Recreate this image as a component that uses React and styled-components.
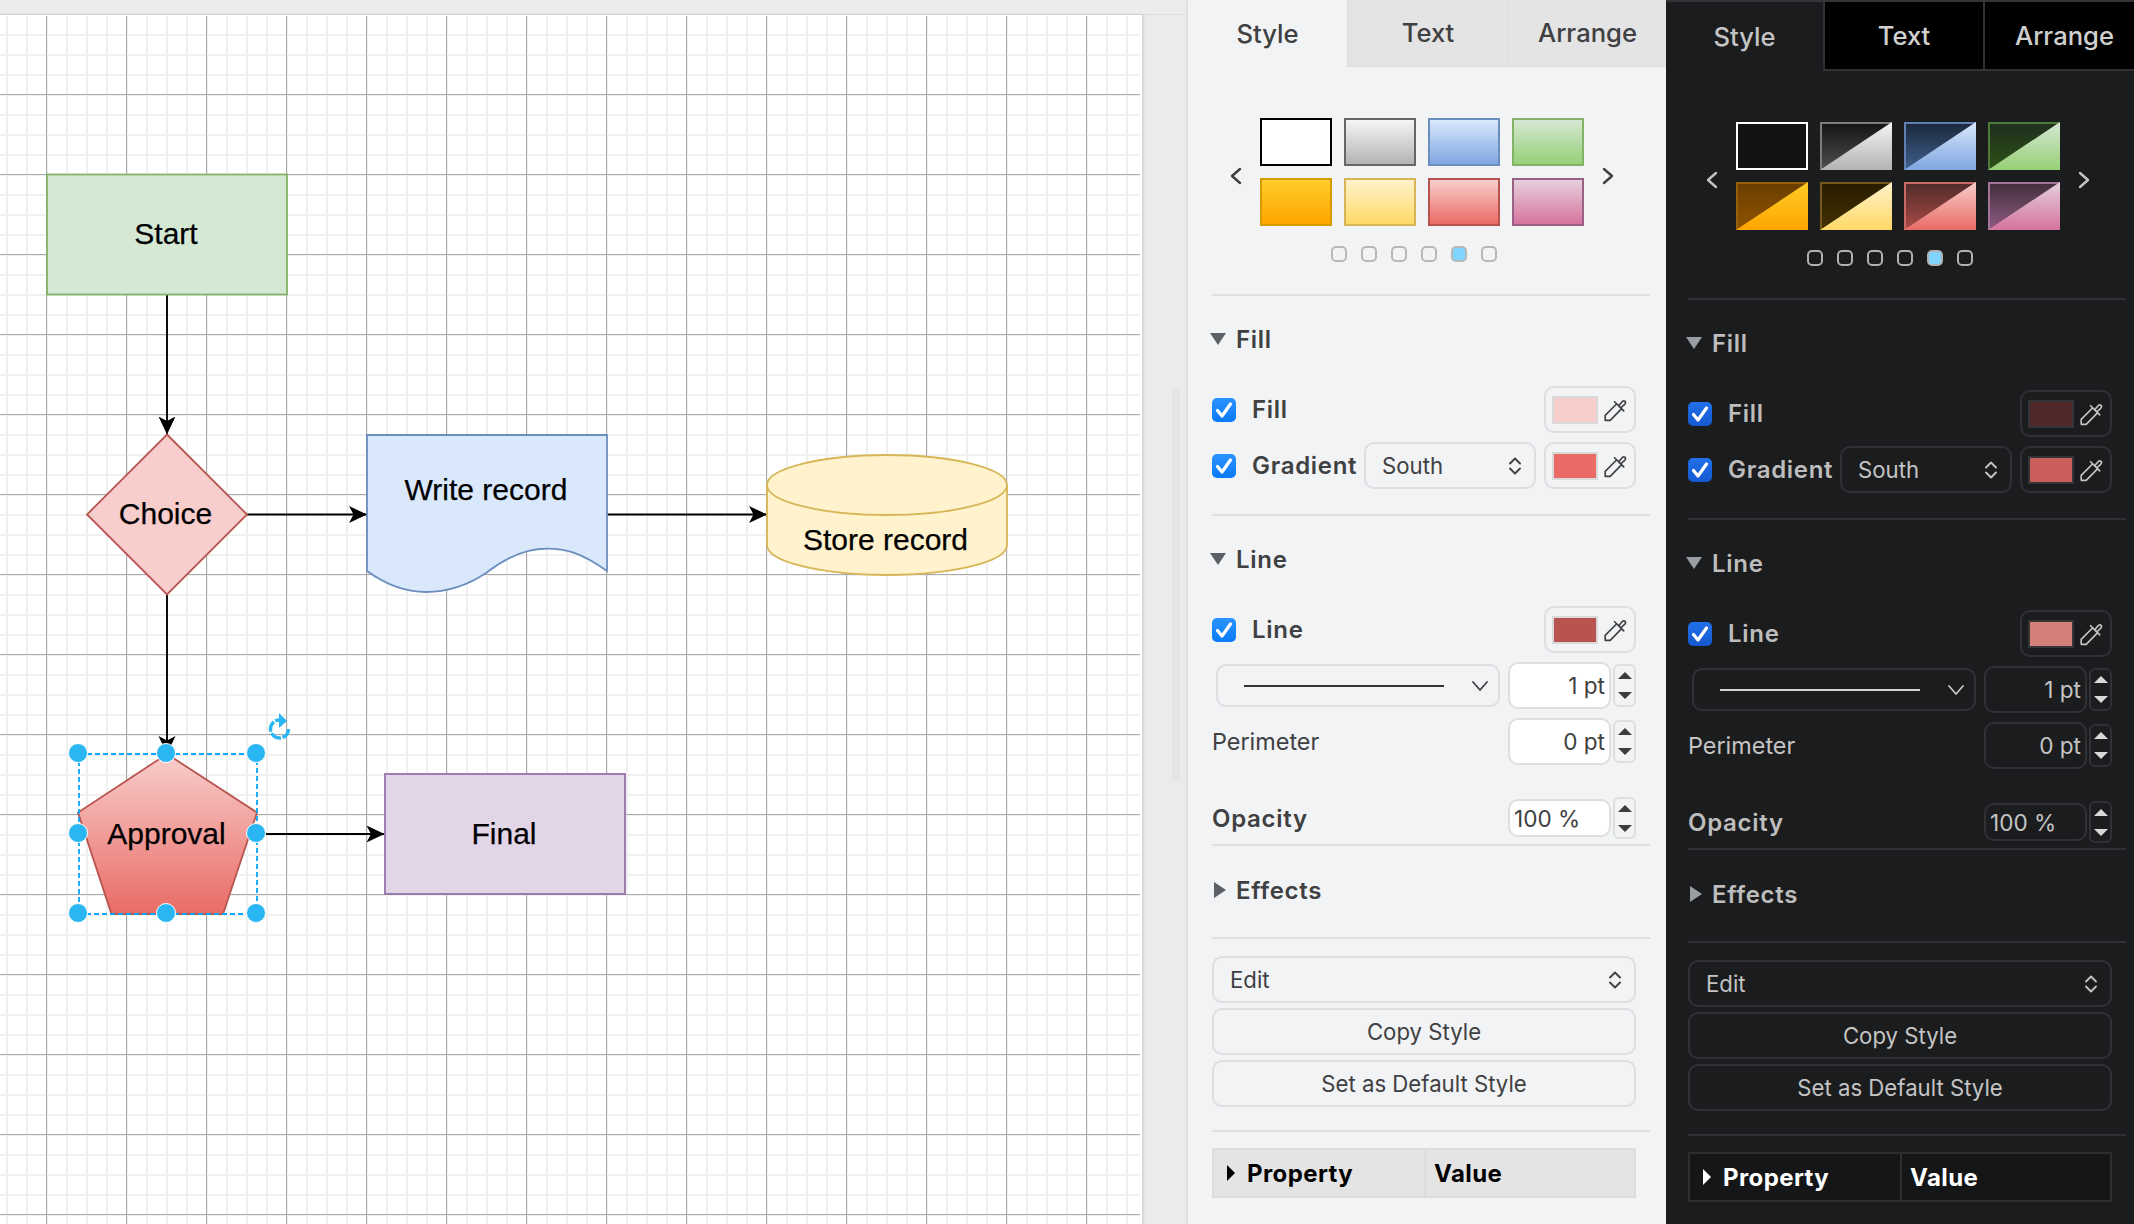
import styled, { ThemeProvider, createGlobalStyle } from "styled-components";

const lightTheme = {
  bg: "#f1f3f5",
  text: "#3f4042",
  strong: "#3f4042",
  tabBg: "#e4e4e4",
  tabText: "#3f4042",
  line: "#dfe0e2",
  field: "#dcdee0",
  inputBg: "#ffffff",
  tri: "#5c5f66",
  step: "#3c3c3c",
  dash: "#333333",
  check: "linear-gradient(#2b93ff, #0a7bf7)",
  dot: "#b8b8b8",
  chip: "#d9d9d9",
  tableBg: "#e4e4e4",
  tableLine: "#dcdcdc",
  tableText: "#000000",
  topStrip: "0",
  tabHeight: "67px",
  tabColumns: "159px 160px 159px",
  inset: "24px",
  width: "478px",
};

const darkTheme = {
  bg: "#1b1c1e",
  text: "#c4c4c4",
  strong: "#bdbdbd",
  tabBg: "#000000",
  tabText: "#d0d0d0",
  line: "#2f3134",
  field: "#2f3134",
  inputBg: "#1b1c1e",
  tri: "#9a9da3",
  step: "#d8d8d8",
  dash: "#d4d4d4",
  check: "linear-gradient(#2270ea, #1458cf)",
  dot: "#b0b0b0",
  chip: "#333538",
  tableBg: "#151618",
  tableLine: "#2e2f31",
  tableText: "#ffffff",
  topStrip: "2px",
  tabHeight: "69px",
  tabColumns: "157px 160px 161px",
  inset: "22px",
  width: "468px",
};

const GlobalStyle = createGlobalStyle`
  html, body {
    margin: 0;
    padding: 0;
    background: #ececec;
  }
  body {
    font-family: Inter, "Liberation Sans", sans-serif;
  }
`;

const Screen = styled.div`
  display: flex;
  width: 2134px;
  height: 1224px;
  overflow: hidden;
`;

const Stage = styled.div`
  width: 1186px;
  flex: none;
  display: flex;
  flex-direction: column;
  background: #ebebeb;
  border-right: 2px solid #e0e0e0;
`;

const TopBar = styled.div`
  height: 14px;
  flex: none;
  background: #ececec;
  border-bottom: 1px solid #dedede;
`;

const Workarea = styled.div`
  flex: 1;
  display: flex;
  min-height: 0;
`;

const Page = styled.div`
  position: relative;
  width: 1140px;
  flex: none;
  overflow: hidden;
  border-top: 1px solid #ffffff;
  border-right: 2px solid #ffffff;
  box-shadow: 1px 0 3px rgba(0, 0, 0, 0.16);
  background-color: #ffffff;
  background-clip: padding-box;
  background-image:
    linear-gradient(to right, #a9a9a9 1px, transparent 1px),
    linear-gradient(to bottom, #a9a9a9 1px, transparent 1px),
    linear-gradient(to right, #f0f0f0 2px, transparent 2px),
    linear-gradient(to bottom, #f0f0f0 2px, transparent 2px);
  background-size: 80px 80px, 80px 80px, 20px 20px, 20px 20px;
  background-position: 46px 0, 0 78px, 6px 0, 0 18px;
`;

const Drawing = styled.svg`
  position: absolute;
  left: 0;
  top: 0;
`;

const Label = styled.text`
  font-family: "Liberation Sans", Arial, sans-serif;
  font-size: 30px;
  fill: #000000;
  stroke: #000000;
  stroke-width: 0.25px;
  text-anchor: middle;
  dominant-baseline: central;
`;

const Gutter = styled.div`
  flex: 1;
  padding: 375px 6px 0 30px;
`;

const ScrollThumb = styled.div`
  width: 8px;
  height: 391px;
  background: #e4e4e4;
`;

const Panel = styled.div`
  width: ${(props) => props.theme.width};
  flex: none;
  box-sizing: border-box;
  height: 1224px;
  overflow: hidden;
  padding-top: ${(props) => props.theme.topStrip};
  background: ${(props) => props.theme.bg};
  color: ${(props) => props.theme.text};
  box-shadow: inset 0 ${(props) => props.theme.topStrip} 0 #333538;
`;

const Tabs = styled.div`
  display: grid;
  grid-template-columns: ${(props) => props.theme.tabColumns};
  height: ${(props) => props.theme.tabHeight};
  width: 478px;
`;

const Tab = styled.div`
  box-sizing: border-box;
  display: flex;
  align-items: center;
  justify-content: center;
  padding-bottom: 1px;
  font-size: 25.6px;
  font-weight: 500;
  color: ${(props) => (props.$active ? props.theme.text : props.theme.tabText)};
  background: ${(props) => (props.$active ? "transparent" : props.theme.tabBg)};
  border-left: ${(props) => (props.$active ? "0" : `2px solid ${props.theme.line}`)};
  border-bottom: ${(props) => (props.$active ? "0" : `2px solid ${props.theme.line}`)};
`;

const Body = styled.div`
  padding-left: ${(props) => props.theme.inset};
`;

const Section = styled.div`
  box-sizing: content-box;
  width: 438px;
  padding-top: ${(props) => props.$top}px;
  padding-bottom: ${(props) => props.$bottom}px;
  border-bottom: ${(props) => (props.$last ? "0" : `2px solid ${props.theme.line}`)};
`;

const Content = styled.div`
  width: 424px;
  display: flex;
  flex-direction: column;
  gap: ${(props) => props.$gap || 9}px;
  margin-top: ${(props) => props.$top || 0}px;
`;

const Picker = styled.div`
  display: flex;
  align-items: center;
  justify-content: space-between;
  box-sizing: border-box;
  padding-left: 17px;
  width: 403px;
`;

const Swatches = styled.div`
  display: grid;
  grid-template-columns: repeat(4, 72px);
  grid-auto-rows: 48px;
  gap: 12px;
`;

const Swatch = styled.div`
  position: relative;
  box-sizing: border-box;
  border: 2px solid ${(props) => props.$border};
  background: ${(props) => props.$fill};
  &::after {
    content: "";
    display: ${(props) => (props.$over ? "block" : "none")};
    position: absolute;
    inset: -2px;
    background: ${(props) => props.$over};
    clip-path: polygon(100% 0, 100% 100%, 0 100%);
  }
`;

const NavHolder = styled.span`
  display: flex;
  margin-top: 7px;
`;

const Dots = styled.div`
  display: flex;
  justify-content: center;
  gap: 14px;
  margin-top: 20px;
  width: 404px;
`;

const Dot = styled.span`
  box-sizing: border-box;
  width: 16px;
  height: 16px;
  border: 2px solid ${(props) => props.theme.dot};
  border-radius: 5px;
  background: ${(props) => (props.$on ? "#80d4ff" : "transparent")};
`;

const Header = styled.div`
  display: flex;
  align-items: center;
  height: 28px;
  font-size: 24px;
  font-weight: 600;
  letter-spacing: 0.7px;
  color: ${(props) => props.theme.strong};
`;

const Caret = styled.svg`
  width: 16px;
  height: 16px;
  margin-left: ${(props) => (props.$open ? "-2px" : "0")};
  margin-right: ${(props) => (props.$open ? "10px" : "8px")};
  fill: ${(props) => props.theme.tri};
`;

const Row = styled.div`
  display: flex;
  align-items: center;
  height: 47px;
`;

const OpacityRow = styled(Row)`
  height: 42px;
`;

const Box = styled.div`
  width: 24px;
  height: 24px;
  flex: none;
  display: flex;
  align-items: center;
  justify-content: center;
  border-radius: 5px;
  background: ${(props) => props.theme.check};
  margin-right: 16px;
`;

const RowLabel = styled.span`
  font-size: 24px;
  font-weight: 600;
  letter-spacing: 0.7px;
  color: ${(props) => props.theme.strong};
`;

const PlainLabel = styled.span`
  font-size: 23.4px;
  color: ${(props) => props.theme.text};
`;

const ColorButton = styled.div`
  box-sizing: border-box;
  margin-left: ${(props) => (props.$push ? "auto" : "8px")};
  width: 92px;
  height: 47px;
  flex: none;
  display: flex;
  align-items: center;
  padding-left: 6px;
  border: 2px solid ${(props) => props.theme.field};
  border-radius: 10px;
`;

const Chip = styled.span`
  box-sizing: border-box;
  width: 46px;
  height: 28px;
  border: 2px solid ${(props) => props.theme.chip};
  background: ${(props) => props.$color};
  margin-right: 5px;
`;

const Select = styled.div`
  box-sizing: border-box;
  display: flex;
  align-items: center;
  justify-content: space-between;
  margin-left: ${(props) => (props.$push ? "auto" : "0")};
  width: ${(props) => props.$width || "424px"};
  height: 47px;
  flex: none;
  padding: 0 12px 0 16px;
  border: 2px solid ${(props) => props.theme.field};
  border-radius: 10px;
  font-size: 22.2px;
  color: ${(props) => props.theme.text};
`;

const LineSelect = styled(Select)`
  width: 284px;
  height: 43px;
  margin-left: 4px;
  padding: 0 9px 0 26px;
`;

const Stroke = styled.span`
  width: 200px;
  height: 2px;
  background: ${(props) => props.theme.dash};
`;

const Spin = styled.div`
  box-sizing: border-box;
  width: 103px;
  height: ${(props) => (props.$short ? "38px" : "47px")};
  margin-left: auto;
  flex: none;
  display: flex;
  align-items: center;
  justify-content: ${(props) => (props.$short ? "flex-start" : "flex-end")};
  padding: 0 4px;
  background: ${(props) => props.theme.inputBg};
  border: 2px solid ${(props) => props.theme.field};
  border-radius: 10px;
  font-size: 22.6px;
  color: ${(props) => props.theme.text};
`;

const Stepper = styled.div`
  box-sizing: border-box;
  width: 23px;
  height: ${(props) => (props.$tall ? "42px" : "43px")};
  margin-left: 2px;
  flex: none;
  display: flex;
  flex-direction: column;
  align-items: center;
  justify-content: center;
  gap: 13px;
  border: 2px solid ${(props) => props.theme.field};
  border-radius: 6px;
`;

const Arrow = styled.span`
  width: 0;
  height: 0;
  border-left: 7px solid transparent;
  border-right: 7px solid transparent;
  border-bottom: ${(props) => (props.$down ? "0" : `7px solid ${props.theme.step}`)};
  border-top: ${(props) => (props.$down ? `7px solid ${props.theme.step}` : "0")};
`;

const Button = styled.div`
  box-sizing: border-box;
  width: 424px;
  height: 47px;
  display: flex;
  align-items: center;
  justify-content: center;
  border: 2px solid ${(props) => props.theme.field};
  border-radius: 10px;
  font-size: 22.2px;
  color: ${(props) => props.theme.text};
`;

const Table = styled.div`
  box-sizing: border-box;
  display: grid;
  grid-template-columns: 210px 1fr;
  width: 424px;
  height: 50px;
  margin-top: 16px;
  background: ${(props) => props.theme.tableBg};
  border: 2px solid ${(props) => props.theme.tableLine};
  color: ${(props) => props.theme.tableText};
  font-size: 24px;
  font-weight: 700;
  letter-spacing: 0.4px;
`;

const Cell = styled.div`
  display: flex;
  align-items: center;
  padding-left: ${(props) => props.$pad}px;
  border-left: ${(props) => (props.$split ? `2px solid ${props.theme.tableLine}` : "0")};
`;

const Wedge = styled.span`
  width: 0;
  height: 0;
  margin-right: 12px;
  border-top: 8px solid transparent;
  border-bottom: 8px solid transparent;
  border-left: 8px solid ${(props) => props.theme.tableText};
`;

const Glyph = styled.svg`
  flex: none;
  fill: none;
  stroke: ${(props) => props.theme.text};
  stroke-linecap: round;
  stroke-linejoin: round;
`;

const Nav = ({ flip }) => (
  <NavHolder>
    <Glyph width="14" height="18" viewBox="0 0 14 18" strokeWidth="2.4">
      <path d={flip ? "M3 2l8 7-8 7" : "M11 2L3 9l8 7"} />
    </Glyph>
  </NavHolder>
);

const UpDown = () => (
  <Glyph width="14" height="18" viewBox="0 0 14 18" strokeWidth="1.9">
    <path d="M2 6.5 7 1.5l5 5M2 11.5l5 5 5-5" />
  </Glyph>
);

const Down = () => (
  <Glyph width="18" height="12" viewBox="0 0 18 12" strokeWidth="1.8">
    <path d="M2 2l7 8 7-8" />
  </Glyph>
);

const Dropper = () => (
  <Glyph width="24" height="24" viewBox="0 0 22 22" strokeWidth="1.5">
    <path d="M2 20.5v-4.6L12.6 5.3l4.5 4.5L6.6 20.5zM10.6 3.4l8.4 8.4" />
    <path d="M14.6 6.8l3.1-3.6c1.8-1.6 3.9.6 2.3 2.4l-3.3 3.1" />
  </Glyph>
);

const Tick = () => (
  <svg width="24" height="24" viewBox="0 0 24 24" fill="none" stroke="#ffffff" strokeWidth="3.2" strokeLinecap="round" strokeLinejoin="round">
    <path d="M5.5 12.5l4.5 5.5 8.5-12" />
  </svg>
);

const Disclosure = ({ title, open }) => (
  <Header>
    <Caret $open={open} viewBox="0 0 16 16">
      <path d={open ? "M0 2h16L8 14z" : "M2 0l12 8-12 8z"} />
    </Caret>
    {title}
  </Header>
);

const StepperControl = ({ tall }) => (
  <Stepper $tall={tall}>
    <Arrow />
    <Arrow $down />
  </Stepper>
);

const ColorControl = ({ color, push }) => (
  <ColorButton $push={push}>
    <Chip $color={color} />
    <Dropper />
  </ColorButton>
);

const lightSwatches = [
  { fill: "#ffffff", border: "#000000" },
  { fill: "linear-gradient(#f5f5f5, #b3b3b3)", border: "#666666" },
  { fill: "linear-gradient(#dae8fc, #7ea6e0)", border: "#6c8ebf" },
  { fill: "linear-gradient(#d5e8d4, #97d077)", border: "#82b366" },
  { fill: "linear-gradient(#ffcd28, #ffa500)", border: "#d79b00" },
  { fill: "linear-gradient(#fff2cc, #ffd966)", border: "#d6b656" },
  { fill: "linear-gradient(#f8cecc, #ea6b66)", border: "#b85450" },
  { fill: "linear-gradient(#e6d0de, #d5739d)", border: "#996185" },
];

const darkSwatches = [
  { fill: "#121212", border: "#ffffff" },
  { fill: "linear-gradient(#161616, #4c4c4c)", over: "linear-gradient(#f5f5f5, #b3b3b3)", border: "#7d7d7d" },
  { fill: "linear-gradient(#1c293c, #3f5f8c)", over: "linear-gradient(#dae8fc, #7ea6e0)", border: "#5f80b0" },
  { fill: "linear-gradient(#1f2f1e, #2d5016)", over: "linear-gradient(#d5e8d4, #97d077)", border: "#4f7a38" },
  { fill: "linear-gradient(#6b3f00, #8f5200)", over: "linear-gradient(#ffcd28, #ffa500)", border: "#97600a" },
  { fill: "linear-gradient(#291d00, #423000)", over: "linear-gradient(#fff2cc, #ffd966)", border: "#75581a" },
  { fill: "linear-gradient(#522c2a, #a84a47)", over: "linear-gradient(#f8cecc, #ea6b66)", border: "#c96a66" },
  { fill: "linear-gradient(#432f3f, #8e5a80)", over: "linear-gradient(#e6d0de, #d5739d)", border: "#a4739a" },
];

const FormatPanel = ({ theme, swatches, colors }) => (
  <ThemeProvider theme={theme}>
    <Panel>
      <Tabs>
        <Tab $active>Style</Tab>
        <Tab>Text</Tab>
        <Tab>Arrange</Tab>
      </Tabs>
      <Body>
        <Section $top={51} $bottom={32}>
          <Picker>
            <Nav />
            <Swatches>
              {swatches.map((s) => (
                <Swatch key={s.fill} $fill={s.fill} $over={s.over} $border={s.border} />
              ))}
            </Swatches>
            <Nav flip />
          </Picker>
          <Dots>
            {[0, 1, 2, 3, 4, 5].map((i) => (
              <Dot key={i} $on={i === 4} />
            ))}
          </Dots>
        </Section>

        <Section $top={29} $bottom={25}>
          <Disclosure title="Fill" open />
          <Content $top={33}>
            <Row>
              <Box><Tick /></Box>
              <RowLabel>Fill</RowLabel>
              <ColorControl color={colors.fill} push />
            </Row>
            <Row>
              <Box><Tick /></Box>
              <RowLabel>Gradient</RowLabel>
              <Select $push $width="172px">
                South
                <UpDown />
              </Select>
              <ColorControl color={colors.gradient} />
            </Row>
          </Content>
        </Section>

        <Section $top={29} $bottom={5}>
          <Disclosure title="Line" open />
          <Content $top={33}>
            <Row>
              <Box><Tick /></Box>
              <RowLabel>Line</RowLabel>
              <ColorControl color={colors.line} push />
            </Row>
            <Row>
              <LineSelect>
                <Stroke />
                <Down />
              </LineSelect>
              <Spin>1 pt</Spin>
              <StepperControl />
            </Row>
            <Row>
              <PlainLabel>Perimeter</PlainLabel>
              <Spin>0 pt</Spin>
              <StepperControl />
            </Row>
          </Content>
          <Content $top={32}>
            <OpacityRow>
              <RowLabel>Opacity</RowLabel>
              <Spin $short>100 %</Spin>
              <StepperControl tall />
            </OpacityRow>
          </Content>
        </Section>

        <Section $top={30} $bottom={33}>
          <Disclosure title="Effects" />
        </Section>

        <Section $top={17} $bottom={23}>
          <Content $gap={5}>
            <Select>
              Edit
              <UpDown />
            </Select>
            <Button>Copy Style</Button>
            <Button>Set as Default Style</Button>
          </Content>
        </Section>

        <Section $last>
          <Table>
            <Cell $pad={13}>
              <Wedge />
              Property
            </Cell>
            <Cell $pad={8} $split>Value</Cell>
          </Table>
        </Section>
      </Body>
    </Panel>
  </ThemeProvider>
);

const handles = [
  [78, 753],
  [166, 753],
  [256, 753],
  [78, 833],
  [256, 833],
  [78, 913],
  [166, 913],
  [256, 913],
];

const Diagram = () => (
  <Drawing width="1140" height="1208" viewBox="0 16 1140 1208">
    <defs>
      <marker id="head" markerUnits="userSpaceOnUse" markerWidth="18" markerHeight="18" refX="18" refY="9" orient="auto">
        <path d="M0 0.5L18 9 0 17.5 4.5 9z" fill="#000000" />
      </marker>
      <linearGradient id="south" x1="0" y1="0" x2="0" y2="1">
        <stop offset="0" stopColor="#f8cecc" />
        <stop offset="1" stopColor="#ea6b66" />
      </linearGradient>
    </defs>

    <g fill="none" stroke="#000000" strokeWidth="1.9">
      <path d="M167 295V434.5" markerEnd="url(#head)" />
      <path d="M167 594V754" markerEnd="url(#head)" />
      <path d="M247 514.5H367" markerEnd="url(#head)" />
      <path d="M607 514.5H767" markerEnd="url(#head)" />
      <path d="M266 834H384.5" markerEnd="url(#head)" />
    </g>

    <g strokeWidth="1.8">
      <rect x="47" y="174.5" width="240" height="120" fill="#d5e8d4" stroke="#82b366" />
      <path d="M167 434.5L247 514.5 167 594.5 87 514.5z" fill="#f8cecc" stroke="#b85450" />
      <path
        d="M367 435H607V571C580 552 565 548.6 547 548.6 525 548.6 505 558 486 573 468 585 447 592 426 592 405 592 385 584 367 571z"
        fill="#dae8fc"
        stroke="#6c8ebf"
      />
      <path
        d="M767 485C767 468.4 820.7 455 887 455S1007 468.4 1007 485V545C1007 561.6 953.3 575 887 575S767 561.6 767 545z"
        fill="#fff2cc"
        stroke="#d6b656"
      />
      <path d="M767 485C767 501.6 820.7 515 887 515S1007 501.6 1007 485" fill="none" stroke="#d6b656" />
      <path d="M167 754L257 812.5 223 914H111.5L78 812.5z" fill="url(#south)" stroke="#b85450" />
      <rect x="385" y="774" width="240" height="120" fill="#e1d5e7" stroke="#9673a6" />
    </g>

    <Label x="166" y="233">Start</Label>
    <Label x="165.5" y="513">Choice</Label>
    <Label x="486" y="489">Write record</Label>
    <Label x="885.5" y="539.5">Store record</Label>
    <Label x="166.5" y="833">Approval</Label>
    <Label x="504" y="833">Final</Label>

    <rect x="79" y="754" width="178" height="160" fill="none" stroke="#00a8ff" strokeWidth="1.8" strokeDasharray="5 3" />
    {handles.map(([cx, cy]) => (
      <circle key={`${cx}-${cy}`} cx={cx} cy={cy} r="9.5" fill="#29b6f2" stroke="#ffffff" strokeWidth="1" />
    ))}

    <path d="M288.5 729A9 9 0 1 1 280 720" fill="none" stroke="#29b6f2" strokeWidth="3.4" strokeDasharray="11 1.6" />
    <path d="M279 713L287 721 279 728z" fill="#29b6f2" />
  </Drawing>
);

const App = () => (
  <>
    <GlobalStyle />
    <Screen>
      <Stage>
        <TopBar />
        <Workarea>
          <Page>
            <Diagram />
          </Page>
          <Gutter>
            <ScrollThumb />
          </Gutter>
        </Workarea>
      </Stage>
      <FormatPanel
        theme={lightTheme}
        swatches={lightSwatches}
        colors={{ fill: "#f8cecc", gradient: "#ea6b66", line: "#b85450" }}
      />
      <FormatPanel
        theme={darkTheme}
        swatches={darkSwatches}
        colors={{ fill: "#4f2a28", gradient: "#cc5f5b", line: "#d57f7b" }}
      />
    </Screen>
  </>
);

export default App;
